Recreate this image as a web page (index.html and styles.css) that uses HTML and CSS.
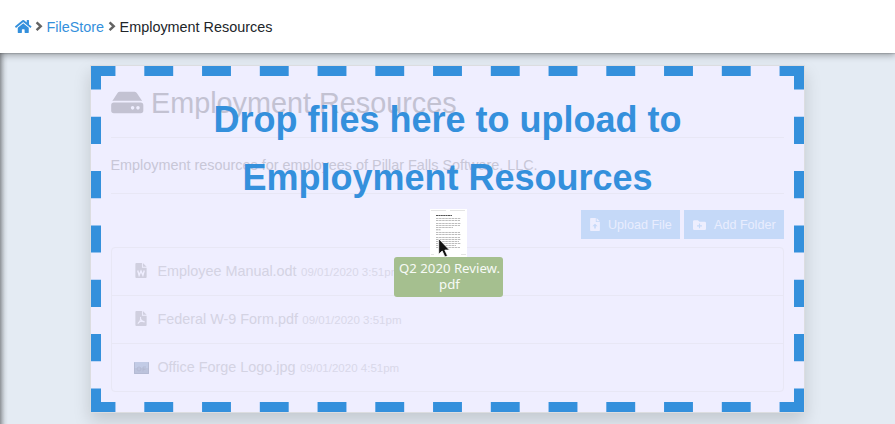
FILE: index.html
```html
<!DOCTYPE html>
<html lang="en">
<head>
<meta charset="utf-8">
<title>Employment Resources</title>
<link rel="stylesheet" href="styles.css">
</head>
<body>
<header class="topbar">
  <svg class="home" viewBox="0 0 576 512"><path d="M280 148 96 300v164a16 16 0 0 0 16 16h112a16 16 0 0 0 16-16v-96a16 16 0 0 1 16-16h64a16 16 0 0 1 16 16v96a16 16 0 0 0 16 16h112a16 16 0 0 0 16-16V300L296 148a12 12 0 0 0-16 0zM572 251l-84-69V44a12 12 0 0 0-12-12h-56a12 12 0 0 0-12 12v72l-89-74a48 48 0 0 0-61 0L4 251a12 12 0 0 0-1 17l25 31a12 12 0 0 0 17 2L280 107a12 12 0 0 1 16 0l235 194a12 12 0 0 0 17-2l25-31a12 12 0 0 0-1-17z"/></svg>
  <svg class="chev" viewBox="0 0 7 10"><path d="M1.2 1.2 5.2 5 1.2 8.8"/></svg>
  <a class="link">FileStore</a>
  <svg class="chev" viewBox="0 0 7 10"><path d="M1.2 1.2 5.2 5 1.2 8.8"/></svg>
  <span class="here">Employment Resources</span>
</header>
<main class="stage">
  <section class="card">
    <h1 class="title">
      <svg class="drive" viewBox="0 0 576 448"><path d="M576 272v96a48 48 0 0 1-48 48H48a48 48 0 0 1-48-48v-96a48 48 0 0 1 48-48h480a48 48 0 0 1 48 48zM528 192a80 80 0 0 1 27 5L462 57a48 48 0 0 0-40-25H154a48 48 0 0 0-40 21L21 197a80 80 0 0 1 27-5zM480 288a32 32 0 1 0 0 64 32 32 0 0 0 0-64zm-96 0a32 32 0 1 0 0 64 32 32 0 0 0 0-64z" fill-rule="evenodd"/></svg>
      <span>Employment Resources</span>
    </h1>
    <p class="desc">Employment resources for employees of Pillar Falls Software, LLC.</p>
    <div class="actions">
      <span class="btn upload"><svg viewBox="0 0 12 16"><path d="M1 0h6v5h5v10a1 1 0 0 1-1 1H1a1 1 0 0 1-1-1V1a1 1 0 0 1 1-1zm7 0 4 4H8zM6 7 2.7 10.3H5V13h2v-2.7h2.3z" fill-rule="evenodd"/></svg>Upload File</span>
      <span class="btn folder"><svg viewBox="0 0 16 12"><path d="M1.5 0H6l2 2h6.5A1.5 1.5 0 0 1 16 3.5v7A1.5 1.5 0 0 1 14.5 12h-13A1.5 1.5 0 0 1 0 10.5v-9A1.5 1.5 0 0 1 1.5 0zM7.3 4v2.3H5v1.4h2.3V10h1.4V7.7H11V6.3H8.7V4z" fill-rule="evenodd"/></svg>Add Folder</span>
    </div>
    <ul class="files">
      <li><svg class="doc" viewBox="0 0 12 16"><path class="page" d="M1 0h6v5h5v10a1 1 0 0 1-1 1H1a1 1 0 0 1-1-1V1a1 1 0 0 1 1-1zm7 0 4 4H8z"/><path class="mark" d="M2.5 8 4 13 6 8.5 8 13 9.5 8"/></svg><span>Employee Manual.odt</span><small>09/01/2020 3:51pm</small></li>
      <li><svg class="doc" viewBox="0 0 12 16"><path class="page" d="M1 0h6v5h5v10a1 1 0 0 1-1 1H1a1 1 0 0 1-1-1V1a1 1 0 0 1 1-1zm7 0 4 4H8z"/><path class="mark thin" d="M5.5 6.3C6 9 5 11.5 2.6 13.5M5.7 8.800C6.5 10.5 8 11.7 9.8 11.8M3.2 12.2C5 11.2 7.5 10.8 9.8 11.2"/></svg><span>Federal W-9 Form.pdf</span><small>09/01/2020 3:51pm</small></li>
      <li><svg class="thumb" viewBox="0 0 15 12"><path fill="#c2cbe6" d="M0 0h15v12H0z"/><path fill="#bcc3dc" d="M0 6h15v6H0z"/><path fill="none" stroke="#b3b8d0" stroke-width=".8" d="M.5.5v11h14V.5M7 7a2 2 0 1 1-4 0 2 2 0 0 1 4 0M9 9.5V5h3M9 7.3h2.5"/></svg><span>Office Forge Logo.jpg</span><small>09/01/2020 4:51pm</small></li>
    </ul>
    <div class="dropzone">
      <svg class="dashes" viewBox="0 0 713 346"><path class="h" d="M10 5h693M10 341h693"/><path class="v" d="M5 10v326M708 10v326"/><path class="corner" d="M0 0h10v10H0zM703 0h10v10h-10zM0 336h10v10H0zM703 336h10v10h-10z"/></svg>
      <div class="prompt">Drop files here to upload to<br>Employment Resources</div>
    </div>
  </section>
  <div class="drag">
    <svg class="preview" viewBox="0 0 37 48"><path fill="#fff" d="M0 0h37v48H0z"/><path class="faint" d="M1 1.5h15M20 1.5h15M1 45.5h3M31 45.5h5"/><path class="head" d="M6 6.5h16"/><path class="lines" d="M6 9.5h25M6 11.5h24M6 14.5h25M6 16.5h24M6 18.5h17M6 23.5h24M6 25.5h25M6 28.5h24M6 30.5h25M6 32.5h23M6 34.5h25M6 36.5h20M6 38.5h24"/><path class="head sub" d="M6 20.8h5"/></svg>
    <div class="label">Q2 2020 Review.<br>pdf</div>
    <svg class="cursor" viewBox="0 0 12 20"><path d="M.7.7v15.5l3.5-3.2 2.7 6 2.6-1.2-2.7-5.7h4.7z"/></svg>
  </div>
</main>
</body>
</html>
```

FILE: styles.css
```css
* { box-sizing: border-box; }
body {
  margin: 0;
  height: 424px;
  overflow: hidden;
  background: #e4ebf3;
  font-family: "Liberation Sans", Arial, sans-serif;
  font-size: 15px;
  color: #212529;
}
.topbar {
  position: relative;
  z-index: 2;
  display: flex;
  align-items: center;
  height: 53px;
  padding-left: 15px;
  background: #fff;
  box-shadow: 0 1px 1px rgba(0, 0, 0, .12), 0 2px 7px rgba(0, 0, 0, .35);
  font-size: 14.4px;
  white-space: nowrap;
}
.home { width: 16.5px; height: 15px; fill: #3490dc; margin-right: 3.5px; }
.chev { width: 8px; height: 10.5px; fill: none; stroke: #636363; stroke-width: 2.3; }
.link { color: #3490dc; margin: 0 4px 0 3.5px; }
.here { margin-left: 3.5px; }
.stage {
  position: relative;
  height: 371px;
  padding: 12px 0 0 90px;
  background: linear-gradient(to right, rgba(0, 0, 0, .38), rgba(0, 0, 0, .2) 2.5px, rgba(0, 0, 0, .06) 5px, transparent 8px);
}
.card {
  position: relative;
  width: 715px;
  height: 348px;
  padding: 0 20px;
  border: 1px solid #dcdde0;
  background: #efeeff;
  box-shadow: 0 8px 16px rgba(0, 0, 0, .15);
}
.title {
  display: flex;
  align-items: center;
  height: 72px;
  margin: 0;
  padding-top: 4px;
  border-bottom: 1px solid #e8e7f5;
  color: #c3c2d2;
  font-size: 28.8px;
  font-weight: 400;
  white-space: nowrap;
}
.drive { width: 32.5px; height: 25px; margin: -3px 7.5px 0 0; fill: #c3c2d2; }
.desc {
  height: 56px;
  margin: 0;
  border-bottom: 1px solid #e8e7f5;
  color: #c8c7d7;
  font-size: 14.4px;
  line-height: 54px;
  text-indent: -.5px;
}
.actions { display: flex; justify-content: flex-end; gap: 4px; padding: 16px 0 8px; }
.btn {
  display: flex;
  align-items: center;
  height: 29px;
  background: #c5d9f8;
  color: #e9edfe;
  font-size: 12.6px;
  white-space: nowrap;
}
.btn svg { fill: #edeefe; }
.upload { width: 99px; padding-left: 9px; }
.upload svg { width: 10px; height: 13px; margin-right: 8px; }
.folder { width: 100px; padding-left: 9px; }
.folder svg { width: 13px; height: 10px; margin-right: 8px; }
.files {
  height: 145px;
  margin: 0;
  padding: 0;
  border: 1px solid #e8e7f5;
  border-radius: 4px;
  list-style: none;
  color: #d4d3e3;
}
.files li {
  display: flex;
  align-items: center;
  height: 48px;
  padding: 0 0 2px 22px;
  border-bottom: 1px solid #e8e7f5;
  font-size: 14.4px;
}
.files li:last-child { height: 47px; border-bottom: 0; }
.files span { margin-left: -.6px; }
.files small { margin-left: 4.4px; padding-top: 2px; font-size: 11.52px; color: #d9d8e9; }
.doc { width: 12px; height: 15px; margin: -1px 11px 0 1px; }
.page { fill: #d0cfdf; }
.mark { fill: none; stroke: #efeeff; stroke-width: 1.5; }
.thin { stroke-width: 1.1; }
.thumb { width: 15px; height: 12px; margin: 2px 9.5px 0 -.5px; }
.dropzone { position: absolute; inset: 0; color: #3490dc; }
.dashes { position: absolute; width: 713px; height: 346px; }
.h, .v { stroke: #3490dc; stroke-width: 10; }
.h { stroke-dasharray: 28.875; stroke-dashoffset: 14.4375; }
.v { stroke-dasharray: 27.1667; stroke-dashoffset: 13.5833; }
.corner { fill: #3490dc; }
.prompt {
  position: relative;
  padding-top: 25px;
  text-align: center;
  font-size: 36px;
  font-weight: 700;
  line-height: 58px;
}
.drag { position: absolute; left: 394px; top: 156px; width: 109px; }
.preview { display: block; width: 37px; height: 48px; margin: 0 auto; }
.faint { stroke: #ddd; stroke-width: .8; }
.head { stroke: #555; stroke-width: 1.2; stroke-dasharray: 2 .4; }
.sub { stroke: #999; stroke-width: .8; }
.lines { stroke: #b4b4b4; stroke-width: .9; stroke-dasharray: 2.5 .6; }
.label {
  height: 40px;
  padding: 3px 0 0 2px;
  border-radius: 3px;
  background: #a5bf8f;
  color: #f7faf6;
  font-family: "Noto Sans", sans-serif;
  font-size: 13.2px;
  line-height: 16px;
  text-align: center;
  white-space: nowrap;
}
.cursor { position: absolute; left: 44px; top: 29px; width: 12px; height: 20px; fill: #111; stroke: #fff; stroke-width: .8; }
```
